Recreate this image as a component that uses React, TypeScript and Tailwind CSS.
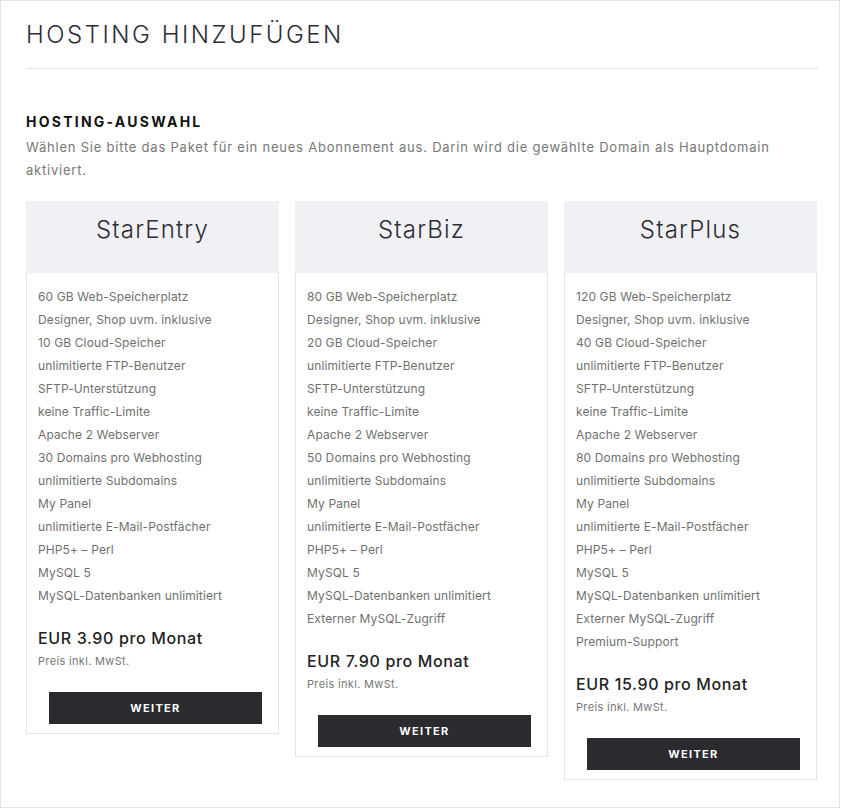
import React from 'react'

interface Plan {
  name: string
  features: string[]
  price: string
}

const common = [
  'Designer, Shop uvm. inklusive',
]

const plans: Plan[] = [
  {
    name: 'StarEntry',
    price: 'EUR 3.90 pro Monat',
    features: [
      '60 GB Web-Speicherplatz',
      ...common,
      '10 GB Cloud-Speicher',
      'unlimitierte FTP-Benutzer',
      'SFTP-Unterstützung',
      'keine Traffic-Limite',
      'Apache 2 Webserver',
      '30 Domains pro Webhosting',
      'unlimitierte Subdomains',
      'My Panel',
      'unlimitierte E-Mail-Postfächer',
      'PHP5+ – Perl',
      'MySQL 5',
      'MySQL-Datenbanken unlimitiert',
    ],
  },
  {
    name: 'StarBiz',
    price: 'EUR 7.90 pro Monat',
    features: [
      '80 GB Web-Speicherplatz',
      ...common,
      '20 GB Cloud-Speicher',
      'unlimitierte FTP-Benutzer',
      'SFTP-Unterstützung',
      'keine Traffic-Limite',
      'Apache 2 Webserver',
      '50 Domains pro Webhosting',
      'unlimitierte Subdomains',
      'My Panel',
      'unlimitierte E-Mail-Postfächer',
      'PHP5+ – Perl',
      'MySQL 5',
      'MySQL-Datenbanken unlimitiert',
      'Externer MySQL-Zugriff',
    ],
  },
  {
    name: 'StarPlus',
    price: 'EUR 15.90 pro Monat',
    features: [
      '120 GB Web-Speicherplatz',
      ...common,
      '40 GB Cloud-Speicher',
      'unlimitierte FTP-Benutzer',
      'SFTP-Unterstützung',
      'keine Traffic-Limite',
      'Apache 2 Webserver',
      '80 Domains pro Webhosting',
      'unlimitierte Subdomains',
      'My Panel',
      'unlimitierte E-Mail-Postfächer',
      'PHP5+ – Perl',
      'MySQL 5',
      'MySQL-Datenbanken unlimitiert',
      'Externer MySQL-Zugriff',
      'Premium-Support',
    ],
  },
]

const PlanCard = ({ plan }: { plan: Plan }) => (
  <div className="border border-[#e4e4e4] bg-white">
    <div className="h-[72px] -mx-px -mt-px bg-[#f0f1f5] flex items-center justify-center pb-[15px]">
      <h3 className="text-[24px] font-light text-[#2d2d33] tracking-[0.05em]">{plan.name}</h3>
    </div>
    <div className="px-[11px] pt-[12px] pb-[9px]">
      <ul>
        {plan.features.map((f) => (
          <li key={f} className="text-[12px] leading-[23px] text-[#707070] tracking-[0.01em]">
            {f}
          </li>
        ))}
      </ul>
      <div className="mt-[19px] text-[16px] leading-[24px] font-medium text-[#222] tracking-[0.04em]">{plan.price}</div>
      <div className="text-[11px] leading-[22px] text-[#777] tracking-[0.03em]">Preis inkl. MwSt.</div>
      <button className="mt-[20px] ml-[11px] w-[213px] h-[32px] bg-[#2b2a2f] text-white text-[11px] font-bold tracking-[0.12em]">
        WEITER
      </button>
    </div>
  </div>
)

export default function App() {
  return (
    <div className="w-[840px] h-[808px] border border-[#e6e6e6] bg-white px-[25px] font-['Inter',sans-serif]">
      <h1 className="pt-[21px] text-[24px] leading-[26px] font-light tracking-[0.105em] text-[#2d2d38]">
        HOSTING HINZUFÜGEN
      </h1>
      <div className="mt-[20px] h-px bg-[#e3e3e3] w-[792px]" />
      <h2 className="mt-[44px] text-[14px] leading-[18px] font-bold tracking-[0.16em] text-[#111]">
        HOSTING-AUSWAHL
      </h2>
      <p className="mt-[5px] text-[13px] leading-[23px] text-[#777] tracking-[0.06em] w-[770px]">
        Wählen Sie bitte das Paket für ein neues Abonnement aus. Darin wird die gewählte Domain als Hauptdomain aktiviert.
      </p>
      <div className="mt-[19px] grid grid-cols-3 gap-[16px] items-start w-[791px]">
        {plans.map((p) => (
          <PlanCard key={p.name} plan={p} />
        ))}
      </div>
    </div>
  )
}
